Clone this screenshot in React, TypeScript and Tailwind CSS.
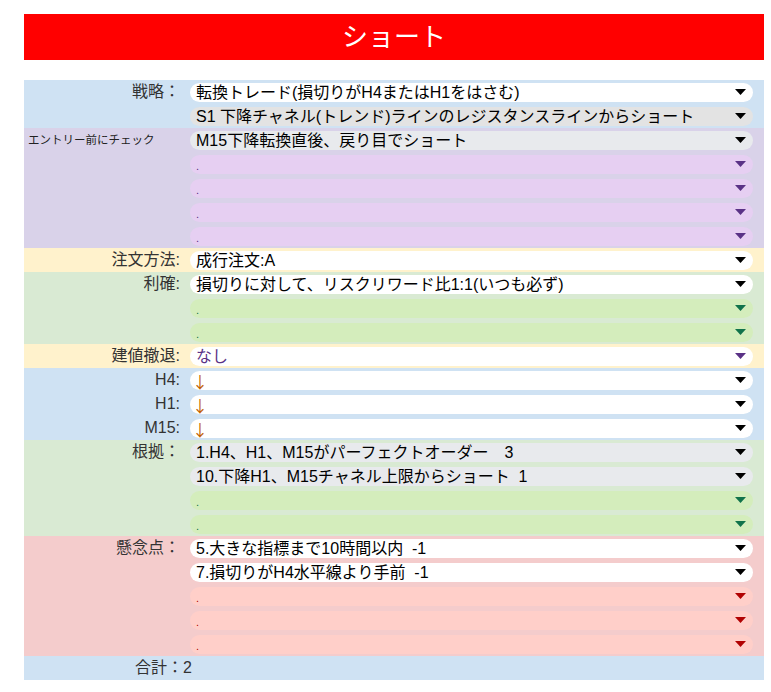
import React from "react";

type Variant = "white" | "gray" | "gray2" | "purple" | "green" | "red";
type Chip = { text: string; v: Variant; color?: string; tri?: string };
type Section = { bg: string; label: string; small?: boolean; rows: Chip[] };

const chipBg: Record<Variant, string> = {
  white: "bg-white",
  gray: "bg-[#e3e3e3]",
  gray2: "bg-[#e8eaed]",
  purple: "bg-[#e6cff2]",
  green: "bg-[#d4edbc]",
  red: "bg-[#ffcfc9]",
};

const dotColor: Record<string, string> = {
  purple: "#5a3286",
  green: "#11734b",
  red: "#b10202",
};

const sections: Section[] = [
  {
    bg: "bg-[#cfe2f3]",
    label: "戦略：",
    rows: [
      { text: "転換トレード(損切りがH4またはH1をはさむ)", v: "white" },
      { text: "S1 下降チャネル(トレンド)ラインのレジスタンスラインからショート", v: "gray" },
    ],
  },
  {
    bg: "bg-[#d9d2e9]",
    label: "エントリー前にチェック",
    small: true,
    rows: [
      { text: "M15下降転換直後、戻り目でショート", v: "gray2" },
      { text: ".", v: "purple" },
      { text: ".", v: "purple" },
      { text: ".", v: "purple" },
      { text: ".", v: "purple" },
    ],
  },
  {
    bg: "bg-[#fff2cc]",
    label: "注文方法:",
    rows: [{ text: "成行注文:A", v: "white" }],
  },
  {
    bg: "bg-[#d9ead3]",
    label: "利確:",
    rows: [
      { text: "損切りに対して、リスクリワード比1:1(いつも必ず)", v: "white" },
      { text: ".", v: "green" },
      { text: ".", v: "green" },
    ],
  },
  {
    bg: "bg-[#fff2cc]",
    label: "建値撤退:",
    rows: [{ text: "なし", v: "white", color: "#5a3286", tri: "#5a3286" }],
  },
];

const tfRows = [{ label: "H4:" }, { label: "H1:" }, { label: "M15:" }];

const sections2: Section[] = [
  {
    bg: "bg-[#d9ead3]",
    label: "根拠：",
    rows: [
      { text: "1.H4、H1、M15がパーフェクトオーダー　3", v: "gray2" },
      { text: "10.下降H1、M15チャネル上限からショート  1", v: "gray2" },
      { text: ".", v: "green" },
      { text: ".", v: "green" },
    ],
  },
  {
    bg: "bg-[#f4cccc]",
    label: "懸念点：",
    rows: [
      { text: "5.大きな指標まで10時間以内  -1", v: "white" },
      { text: "7.損切りがH4水平線より手前  -1", v: "white" },
      { text: ".", v: "red" },
      { text: ".", v: "red" },
      { text: ".", v: "red" },
    ],
  },
];

function Tri({ color }: { color: string }) {
  return (
    <svg width="11" height="6" viewBox="0 0 11 6" className="shrink-0">
      <polygon points="0,0 11,0 5.5,6" fill={color} />
    </svg>
  );
}

function ChipRow({ chip }: { chip: Chip }) {
  const isDot = chip.text === ".";
  const dc = dotColor[chip.v];
  const triColor = chip.tri ?? (dc ? dc : "#000000");
  return (
    <div className="h-[24px] flex items-center pl-[6px] pr-[11px]">
      <div
        className={`h-[19px] w-full rounded-full flex items-center justify-between pl-[6px] pr-[7px] ${chipBg[chip.v]}`}
      >
        {isDot ? (
          <span className="text-[11px] leading-[19px] pt-[4px]" style={{ color: dc }}>
            .
          </span>
        ) : (
          <span
            className="text-[16px] leading-[19px] whitespace-pre"
            style={{ color: chip.color ?? "#000000" }}
          >
            {chip.text}
          </span>
        )}
        <Tri color={triColor} />
      </div>
    </div>
  );
}

function SectionBlock({ s }: { s: Section }) {
  return (
    <div className={`flex ${s.bg}`}>
      <div className="w-[160px] shrink-0">
        {s.small ? (
          <div className="h-[24px] flex items-center pl-[4px] pt-[1px] text-[11.5px] text-[#222]">
            {s.label}
          </div>
        ) : (
          <div className="h-[24px] flex items-center justify-end pr-[4px] text-[16px] text-[#333]">
            {s.label}
          </div>
        )}
      </div>
      <div className="flex-1">
        {s.rows.map((r, i) => (
          <ChipRow key={i} chip={r} />
        ))}
      </div>
    </div>
  );
}

export default function App() {
  return (
    <div
      className="w-[771px] h-[692px] bg-white pt-[14px] pl-[24px]"
      style={{ fontFamily: '"Liberation Sans", "Noto Sans CJK JP", sans-serif' }}
    >
      <div className="w-[740px] h-[46px] bg-[#ff0000] flex items-center justify-center text-white text-[26px]">
        ショート
      </div>
      <div className="mt-[20px] w-[740px]">
        {sections.map((s, i) => (
          <SectionBlock key={i} s={s} />
        ))}
        <div className="bg-[#cfe2f3]">
          {tfRows.map((t, i) => (
            <div key={i} className="flex">
              <div className="w-[160px] shrink-0 h-[24px] flex items-center justify-end pr-[4px] text-[16px] text-[#333]">
                {t.label}
              </div>
              <div className="flex-1">
                <div className="h-[24px] flex items-center pl-[6px] pr-[11px]">
                  <div className="h-[19px] w-full rounded-full bg-white flex items-center justify-between pl-[6px] pr-[7px]">
                    <span
                      className="text-[16px] leading-[19px] pt-[3px] ml-[-4px] text-[#c26100]"
                      style={{ fontFamily: '"Noto Sans CJK JP", sans-serif' }}
                    >
                      ↓
                    </span>
                    <Tri color="#000000" />
                  </div>
                </div>
              </div>
            </div>
          ))}
        </div>
        {sections2.map((s, i) => (
          <SectionBlock key={i} s={s} />
        ))}
        <div className="flex bg-[#cfe2f3] h-[24px] items-center">
          <div className="w-[168px] shrink-0 text-right text-[16px] text-[#333]">合計：2</div>
        </div>
      </div>
    </div>
  );
}
